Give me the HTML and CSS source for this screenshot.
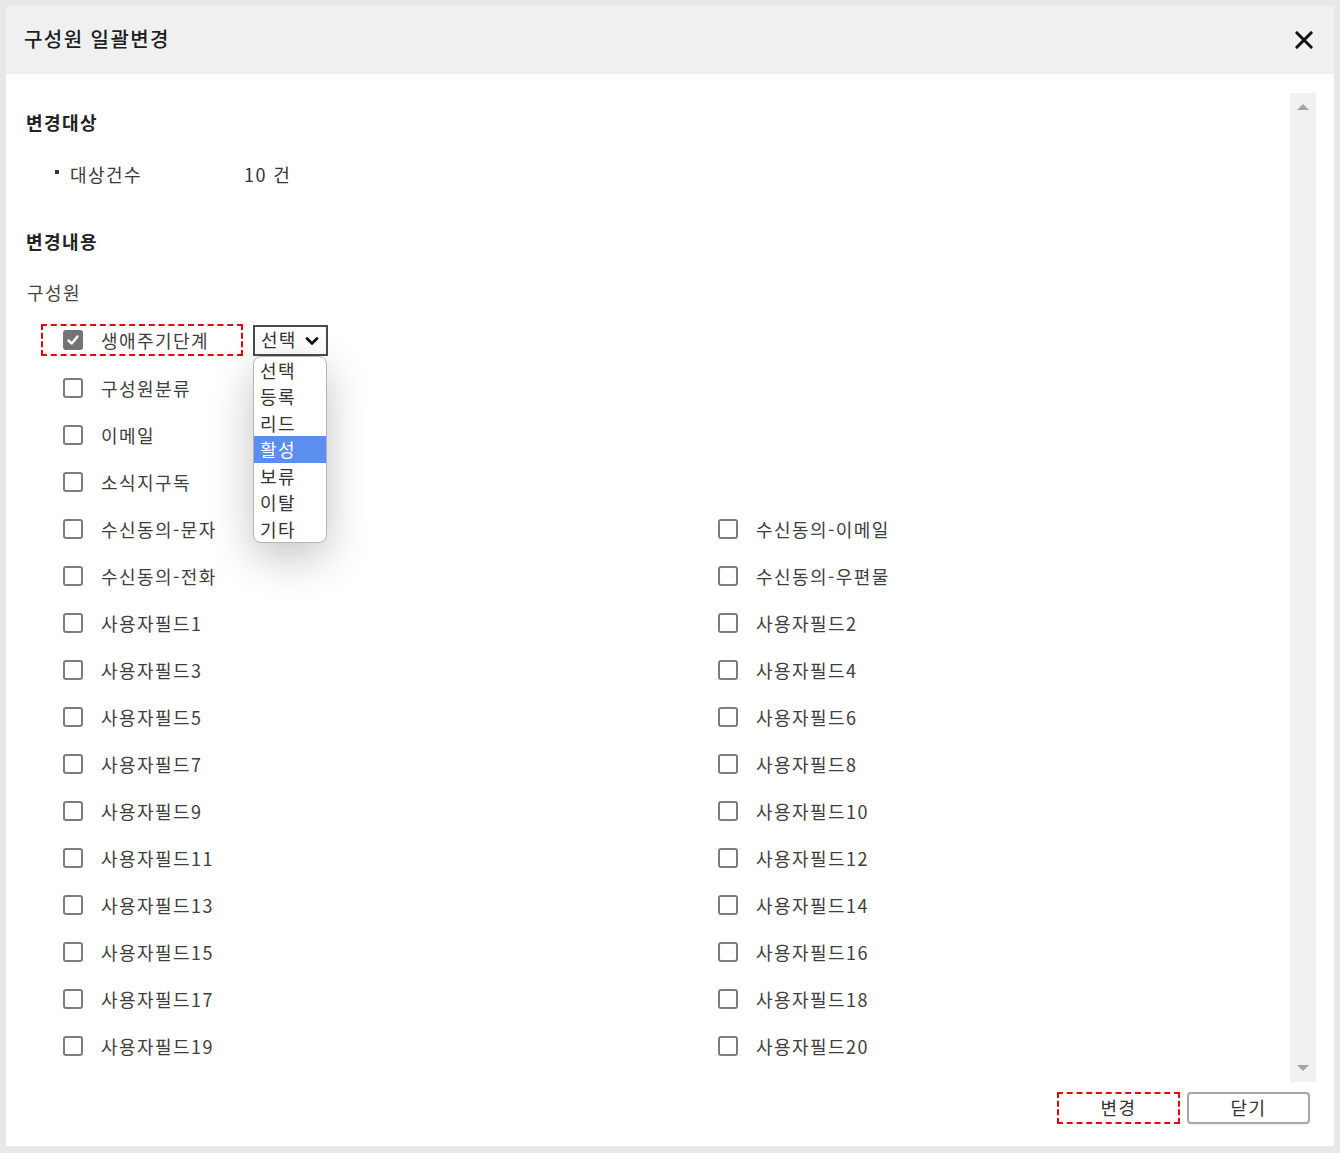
FILE: index.html
```html
<!DOCTYPE html>
<html lang="ko">
<head>
<meta charset="utf-8">
<title>구성원 일괄변경</title>
<link rel="stylesheet" href="styles.css">
</head>
<body>
<div class="dialog">
  <header class="dlg-head">
    <h1 class="dlg-title">구성원 일괄변경</h1>
    <button class="close" type="button" aria-label="닫기">
      <svg width="18" height="18" viewBox="0 0 18 18"><path d="M2 2 L16 16 M16 2 L2 16" stroke="#111" stroke-width="3" stroke-linecap="square"/></svg>
    </button>
  </header>
  <div class="dlg-body">
    <div class="content">
      <h2 class="sec-title">변경대상</h2>
      <div class="info-row">
        <span class="bullet"></span>
        <span class="info-label">대상건수</span>
        <span class="info-val">10 건</span>
      </div>
      <h2 class="sec-title sec-two">변경내용</h2>
      <div class="group-label">구성원</div>
      <div class="grid">
        <div class="item full first">
          <label class="hl">
            <span class="cb checked"><svg width="14" height="14" viewBox="0 0 14 14"><path d="M2.5 7.5 L5.8 10.5 L11.5 3.5" fill="none" stroke="#fff" stroke-width="2.4" stroke-linecap="round" stroke-linejoin="round"/></svg></span>
            <span class="lbl">생애주기단계</span>
          </label>
          <div class="select-wrap">
            <div class="select">
              <span>선택</span>
              <svg class="chev" width="14" height="10" viewBox="0 0 14 10"><path d="M2 2.5 L7 7.5 L12 2.5" fill="none" stroke="#111" stroke-width="2.8" stroke-linecap="round" stroke-linejoin="round"/></svg>
            </div>
            <ul class="options">
              <li>선택</li>
              <li>등록</li>
              <li>리드</li>
              <li class="active">활성</li>
              <li>보류</li>
              <li>이탈</li>
              <li>기타</li>
            </ul>
          </div>
        </div>
        <div class="item full"><span class="cb"></span><span class="lbl">구성원분류</span></div>
        <div class="item full"><span class="cb"></span><span class="lbl">이메일</span></div>
        <div class="item full"><span class="cb"></span><span class="lbl">소식지구독</span></div>
        <div class="item"><span class="cb"></span><span class="lbl">수신동의-문자</span></div>
        <div class="item"><span class="cb"></span><span class="lbl">수신동의-이메일</span></div>
        <div class="item"><span class="cb"></span><span class="lbl">수신동의-전화</span></div>
        <div class="item"><span class="cb"></span><span class="lbl">수신동의-우편물</span></div>
        <div class="item"><span class="cb"></span><span class="lbl">사용자필드1</span></div>
        <div class="item"><span class="cb"></span><span class="lbl">사용자필드2</span></div>
        <div class="item"><span class="cb"></span><span class="lbl">사용자필드3</span></div>
        <div class="item"><span class="cb"></span><span class="lbl">사용자필드4</span></div>
        <div class="item"><span class="cb"></span><span class="lbl">사용자필드5</span></div>
        <div class="item"><span class="cb"></span><span class="lbl">사용자필드6</span></div>
        <div class="item"><span class="cb"></span><span class="lbl">사용자필드7</span></div>
        <div class="item"><span class="cb"></span><span class="lbl">사용자필드8</span></div>
        <div class="item"><span class="cb"></span><span class="lbl">사용자필드9</span></div>
        <div class="item"><span class="cb"></span><span class="lbl">사용자필드10</span></div>
        <div class="item"><span class="cb"></span><span class="lbl">사용자필드11</span></div>
        <div class="item"><span class="cb"></span><span class="lbl">사용자필드12</span></div>
        <div class="item"><span class="cb"></span><span class="lbl">사용자필드13</span></div>
        <div class="item"><span class="cb"></span><span class="lbl">사용자필드14</span></div>
        <div class="item"><span class="cb"></span><span class="lbl">사용자필드15</span></div>
        <div class="item"><span class="cb"></span><span class="lbl">사용자필드16</span></div>
        <div class="item"><span class="cb"></span><span class="lbl">사용자필드17</span></div>
        <div class="item"><span class="cb"></span><span class="lbl">사용자필드18</span></div>
        <div class="item"><span class="cb"></span><span class="lbl">사용자필드19</span></div>
        <div class="item"><span class="cb"></span><span class="lbl">사용자필드20</span></div>
      </div>
    </div>
    <div class="scrollbar">
      <span class="arrow up"></span>
      <span class="arrow down"></span>
    </div>
  </div>
  <footer class="dlg-foot">
    <button class="btn btn-focus" type="button">변경</button>
    <button class="btn" type="button">닫기</button>
  </footer>
</div>
</body>
</html>
```

FILE: styles.css
```css
* { box-sizing: border-box; }

html, body {
  margin: 0;
  padding: 0;
}

body {
  background: #e8e8e8;
  font-family: "Noto Sans CJK KR", "Noto Sans", sans-serif;
  color: #3a3a3a;
  font-size: 18px;
  letter-spacing: 0.08em;
  width: 1340px;
  height: 1153px;
  overflow: hidden;
}

.dialog {
  margin: 6px 0 0 6px;
  width: 1328px;
  height: 1140px;
  background: #fff;
  display: flex;
  flex-direction: column;
}

.dlg-head {
  height: 68px;
  flex: none;
  background: #f0f0f0;
  display: flex;
  align-items: center;
  justify-content: space-between;
  padding: 0 21px 0 18px;
}

.dlg-title {
  margin: 0;
  font-size: 20px;
  font-weight: 500;
  line-height: 28px;
  color: #1e1e1e;
  padding-bottom: 2px;
}

.close {
  border: 0;
  background: none;
  padding: 0;
  width: 18px;
  height: 18px;
  display: flex;
}

.dlg-body {
  flex: 1;
  display: flex;
  min-height: 0;
}

.content {
  flex: 1;
  padding-left: 20px;
}

.sec-title {
  margin: 35px 0 0;
  font-size: 18px;
  font-weight: 700;
  line-height: 26px;
  color: #222;
}

.sec-two {
  margin-top: 41px;
}

.info-row {
  margin: 26px 0 0 29px;
  display: flex;
  align-items: center;
  line-height: 26px;
  height: 26px;
}

.bullet {
  width: 4px;
  height: 4px;
  background: #333;
  margin-right: 11px;
  margin-bottom: 5px;
}

.info-label {
  width: 174px;
}

.info-val {
  color: #333;
}

.group-label {
  margin-top: 25px;
  margin-left: 1px;
  line-height: 26px;
  color: #444;
}

.grid {
  margin: 12px 0 0 37px;
  display: grid;
  grid-template-columns: 655px 1fr;
  grid-auto-rows: 47px;
  align-items: center;
}

.item {
  display: flex;
  align-items: center;
  gap: 18px;
  line-height: 26px;
}

.item.full {
  grid-column: 1 / -1;
}

.item.first {
  gap: 10px;
}

.cb {
  width: 20px;
  height: 20px;
  flex: none;
  border: 2px solid #7d7d7d;
  border-radius: 3px;
  background: #fff;
  display: flex;
  align-items: center;
  justify-content: center;
}

.cb.checked {
  background: #747474;
  border-color: #747474;
}

.lbl {
  color: #3e3e3e;
  white-space: nowrap;
}

.hl {
  display: flex;
  align-items: center;
  gap: 18px;
  width: 202px;
  height: 32px;
  margin-left: -22px;
  padding-left: 20px;
  border: 2px dashed #e8000e;
  margin-top: -2px;
}

.select-wrap {
  position: relative;
  margin-top: -1px;
}

.select {
  width: 75px;
  height: 31px;
  border: 2px solid #4a4a4a;
  display: flex;
  align-items: center;
  justify-content: space-between;
  padding: 0 7px 2px 6px;
  color: #333;
  line-height: 26px;
  background: #fff;
  letter-spacing: 0.06em;
}

.chev {
  margin-top: 3px;
}

.options {
  position: absolute;
  left: 0;
  top: 31px;
  width: 74px;
  margin: 0;
  padding: 0;
  list-style: none;
  background: #fff;
  border: 1px solid #b4b4b4;
  border-radius: 8px;
  overflow: hidden;
  box-shadow: 0 14px 44px rgba(0, 0, 0, 0.24);
  z-index: 5;
}

.options li {
  height: 26.5px;
  line-height: 26px;
  padding-left: 6px;
  color: #333;
}

.options li.active {
  background: #5c8ef1;
  color: #fff;
}

.scrollbar {
  width: 26px;
  flex: none;
  margin: 19px 18px 0 0;
  background: #f1f1f1;
  display: flex;
  flex-direction: column;
  justify-content: space-between;
  align-items: center;
  padding: 11px 0 11px;
}

.arrow {
  width: 0;
  height: 0;
  border-left: 6px solid transparent;
  border-right: 6px solid transparent;
}

.arrow.up {
  border-bottom: 6px solid #a3a3a3;
}

.arrow.down {
  border-top: 6px solid #a3a3a3;
}

.dlg-foot {
  flex: none;
  height: 64px;
  display: flex;
  justify-content: flex-end;
  align-items: flex-start;
  gap: 7px;
  padding: 10px 24px 0 0;
}

.btn {
  width: 123px;
  height: 32px;
  font-family: inherit;
  font-size: 18px;
  letter-spacing: 0.08em;
  line-height: 26px;
  color: #333;
  background: #fff;
  border: 2px solid #a8a8a8;
  border-radius: 4px;
  padding: 0 0 2px;
  box-shadow: 0 1px 2px rgba(0, 0, 0, 0.08);
}

.btn-focus {
  border: 2px dashed #e8000e;
  border-radius: 0;
  box-shadow: none;
}
```
